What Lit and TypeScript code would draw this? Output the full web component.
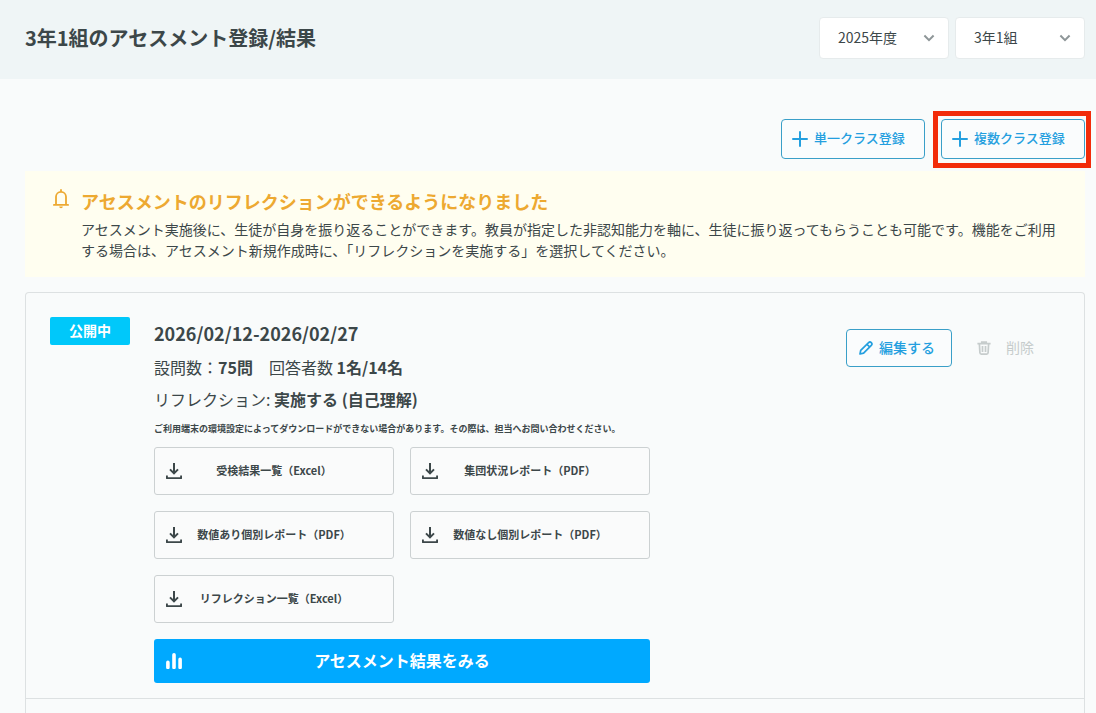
import { LitElement, html, css, svg } from "lit";
import { customElement, state } from "lit/decorators.js";

const plusIcon = svg`<svg class="icon" width="16" height="16" viewBox="0 0 16 16" aria-hidden="true">
  <path d="M8 1v14M1 8h14" fill="none" stroke="currentColor" stroke-width="2" stroke-linecap="round"/>
</svg>`;

const bellIcon = svg`<svg class="icon" width="16" height="20" viewBox="0 0 16 20" aria-hidden="true">
  <path d="M3 15V7.8a5 5 0 0 1 10 0V15M.9 15.9h14.2M8 2.6V1" fill="none" stroke="currentColor" stroke-width="1.8" stroke-linecap="round"/>
  <path d="M6.2 17.6h3.6a1.8 1.6 0 0 1-3.6 0z" fill="currentColor"/>
</svg>`;

const chevronIcon = svg`<svg class="chevron" width="12" height="8" viewBox="0 0 12 8" aria-hidden="true">
  <path d="M1.4 1.5L6 6.1l4.6-4.6" fill="none" stroke="currentColor" stroke-width="2"/>
</svg>`;

const pencilIcon = svg`<svg class="icon" width="14" height="14" viewBox="0 0 14 14" aria-hidden="true">
  <path d="M1 13l.7-3.7 7.9-7.6a1.9 1.9 0 0 1 2.7 2.7L4.6 12.2zM8 3.3l2.7 2.7" fill="none" stroke="currentColor" stroke-width="1.7" stroke-linejoin="round"/>
</svg>`;

const trashIcon = svg`<svg class="icon" width="14" height="14" viewBox="0 0 14 14" aria-hidden="true">
  <path d="M.4 2.6h13.2M4.8 2.4V1h4.4v1.4M2.4 3l.5 8.8q.1 1.3 1.4 1.3h5.4q1.3 0 1.4-1.3l.5-8.8M5.5 5v6M8.5 5v6" fill="none" stroke="currentColor" stroke-width="1.7"/>
</svg>`;

const downloadIcon = svg`<svg class="icon" width="16" height="18" viewBox="0 0 16 18" aria-hidden="true">
  <path d="M8 1v10M4 7.4l4 4 4-4" fill="none" stroke="currentColor" stroke-width="2"/>
  <path d="M.9 13.4v2.7h14.2v-2.7" fill="none" stroke="currentColor" stroke-width="1.9" stroke-linejoin="round"/>
</svg>`;

const chartIcon = svg`<svg class="icon" width="16" height="16" viewBox="0 0 16 16" aria-hidden="true">
  <path d="M1.9 9.4v5M8 1.8v12.6M14.1 6.4v8" fill="none" stroke="currentColor" stroke-width="3.6" stroke-linecap="round"/>
</svg>`;

@customElement("app-root")
export class AppRoot extends LitElement {
  static styles = css`
    :host {
      display: block;
      color: #3c4749;
      font-family: "Noto Sans CJK JP", "Noto Sans", sans-serif;
      font-size: 14px;
      line-height: 20px;
    }
    * {
      box-sizing: border-box;
    }
    h1, h2, p {
      margin: 0;
    }
    button, select {
      font: inherit;
      color: inherit;
    }
    button {
      cursor: pointer;
      padding: 0;
    }
    button > span {
      padding-bottom: 2px;
    }
    .icon {
      display: block;
      flex: none;
    }
    .page {
      display: flex;
      flex-direction: column;
      min-height: 100vh;
      background: #f9fbfb;
    }
    .header {
      display: flex;
      align-items: center;
      justify-content: space-between;
      min-height: 79px;
      padding: 0 11px 3px 25px;
      background: #eff5f6;
    }
    .title {
      font-size: 20px;
      line-height: 28px;
      font-weight: 700;
    }
    .filters {
      display: flex;
      gap: 6px;
    }
    .picker {
      display: grid;
      align-items: center;
      width: 130px;
    }
    .picker > * {
      grid-area: 1 / 1;
    }
    .select {
      appearance: none;
      height: 42px;
      width: 100%;
      padding: 0 30px 2px 18px;
      border: 1px solid #e6ebec;
      border-radius: 4px;
      background: #fff;
    }
    .chevron {
      justify-self: end;
      margin-right: 14px;
      color: #8e9698;
      pointer-events: none;
    }
    .main {
      display: flex;
      flex: 1;
      flex-direction: column;
      padding: 40px 11px 0 25px;
    }
    .register {
      display: flex;
      justify-content: flex-end;
      gap: 16px;
    }
    .outlined {
      display: flex;
      align-items: center;
      border: 1px solid #3a9fc8;
      border-radius: 4px;
      background: #fafcfd;
      color: #249fdf;
      font-weight: 500;
    }
    .add {
      gap: 6px;
      width: 144px;
      height: 40px;
      padding-left: 10px;
      font-size: 13px;
    }
    .marked {
      position: relative;
    }
    .marked::after {
      content: "";
      position: absolute;
      inset: -8px -6px -9px -8px;
      border: 5px solid #f22c0a;
      pointer-events: none;
    }
    .notice {
      display: flex;
      gap: 12px;
      margin-top: 12px;
      padding: 18px 28px 16px;
      background: #fffef0;
    }
    .notice > .icon {
      color: #eda931;
    }
    .notice-title {
      color: #eda931;
      font-size: 18px;
      line-height: 24px;
      font-weight: 700;
    }
    .notice-text {
      margin-top: 6px;
      line-height: 21px;
    }
    .list {
      display: flex;
      flex: 1;
      flex-direction: column;
      margin-top: 15px;
      border: 1px solid #dde1e2;
      border-bottom: 0;
      border-radius: 4px 4px 0 0;
    }
    .item {
      display: flex;
      align-items: flex-start;
      gap: 24px;
      padding: 24px 24px 15px;
      border-bottom: 1px solid #dde1e2;
    }
    .badge {
      width: 80px;
      padding-bottom: 2px;
      border-radius: 2px;
      background: #00c8fa;
      color: #fff;
      line-height: 26px;
      font-weight: 700;
      text-align: center;
    }
    .details {
      flex: 0 1 496px;
    }
    .period {
      font-size: 18px;
      line-height: 32px;
      font-weight: 700;
    }
    .fact {
      font-size: 16px;
      line-height: 32px;
    }
    .fact:first-of-type {
      margin-top: 2px;
    }
    .hint {
      margin: 6px 0 10px;
      font-size: 9px;
      line-height: 16px;
      font-weight: 700;
    }
    .downloads {
      display: grid;
      grid-template-columns: 1fr 1fr;
      gap: 16px;
    }
    .wide {
      display: grid;
      grid-template-columns: 16px 1fr 16px;
      align-items: center;
      padding: 0 11px;
      border-radius: 3px;
      font-weight: 700;
    }
    .download {
      height: 48px;
      border: 1px solid #ccd1d2;
      background: #fafbfb;
      font-size: 11px;
    }
    .result {
      width: 100%;
      height: 44px;
      margin-top: 16px;
      padding: 0 12px;
      border: 0;
      background: #00a9ff;
      color: #fff;
      font-size: 16px;
    }
    .actions {
      display: flex;
      gap: 12px;
      margin: 12px 0 0 auto;
    }
    .edit {
      gap: 6px;
      width: 106px;
      height: 38px;
      padding-left: 12px;
    }
    .delete {
      display: flex;
      align-items: center;
      gap: 15px;
      width: 96px;
      height: 38px;
      padding-left: 13px;
      border: 0;
      background: none;
      color: #c6cccc;
    }
  `;

  @state() private years = ["2025年度"];
  @state() private classes = ["3年1組"];
  @state() private reports = [
    "受検結果一覧（Excel）",
    "集団状況レポート（PDF）",
    "数値あり個別レポート（PDF）",
    "数値なし個別レポート（PDF）",
    "リフレクション一覧（Excel）",
  ];

  private picker(label: string, options: string[]) {
    return html`<label class="picker">
      <select class="select" aria-label=${label}>
        ${options.map((o) => html`<option>${o}</option>`)}
      </select>
      ${chevronIcon}
    </label>`;
  }

  render() {
    return html`
      <div class="page" lang="ja">
        <header class="header">
          <h1 class="title">3年1組のアセスメント登録/結果</h1>
          <div class="filters">
            ${this.picker("年度", this.years)} ${this.picker("クラス", this.classes)}
          </div>
        </header>
        <main class="main">
          <div class="register">
            <button class="outlined add" type="button">${plusIcon}<span>単一クラス登録</span></button>
            <div class="marked">
              <button class="outlined add" type="button">${plusIcon}<span>複数クラス登録</span></button>
            </div>
          </div>
          <section class="notice">
            ${bellIcon}
            <div>
              <h2 class="notice-title">アセスメントのリフレクションができるようになりました</h2>
              <p class="notice-text">アセスメント実施後に、生徒が自身を振り返ることができます。教員が指定した非認知能力を軸に、生徒に振り返ってもらうことも可能です。機能をご利用する場合は、アセスメント新規作成時に、「リフレクションを実施する」を選択してください。</p>
            </div>
          </section>
          <div class="list">
            <article class="item">
              <span class="badge">公開中</span>
              <div class="details">
                <h2 class="period">2026/02/12-2026/02/27</h2>
                <p class="fact">設問数：<b>75問</b>　回答者数 <b>1名/14名</b></p>
                <p class="fact">リフレクション: <b>実施する (自己理解)</b></p>
                <p class="hint">ご利用端末の環境設定によってダウンロードができない場合があります。その際は、担当へお問い合わせください。</p>
                <div class="downloads">
                  ${this.reports.map(
                    (name) => html`<button class="wide download" type="button">${downloadIcon}<span>${name}</span></button>`
                  )}
                </div>
                <button class="wide result" type="button">${chartIcon}<span>アセスメント結果をみる</span></button>
              </div>
              <div class="actions">
                <button class="outlined edit" type="button">${pencilIcon}<span>編集する</span></button>
                <button class="delete" type="button" disabled>${trashIcon}<span>削除</span></button>
              </div>
            </article>
          </div>
        </main>
      </div>
    `;
  }
}
